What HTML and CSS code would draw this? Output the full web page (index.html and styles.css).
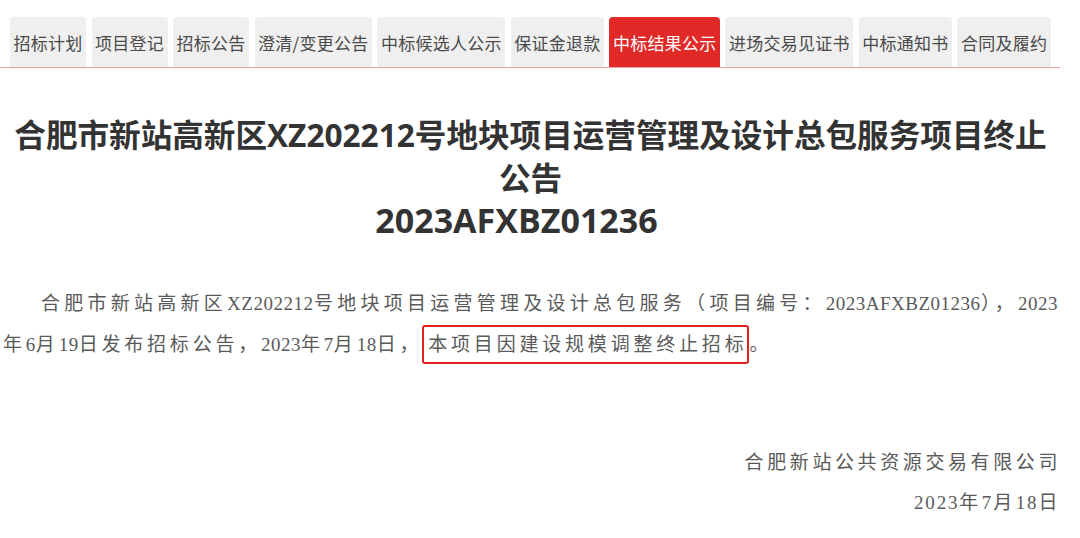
FILE: index.html
```html
<!DOCTYPE html>
<html lang="zh-CN">
<head>
<meta charset="utf-8">
<title>中标结果公示</title>
<link rel="stylesheet" href="styles.css">
</head>
<body>
<nav class="tabs">
  <a class="tab">招标计划</a>
  <a class="tab">项目登记</a>
  <a class="tab">招标公告</a>
  <a class="tab">澄清/变更公告</a>
  <a class="tab">中标候选人公示</a>
  <a class="tab">保证金退款</a>
  <a class="tab active">中标结果公示</a>
  <a class="tab">进场交易见证书</a>
  <a class="tab">中标通知书</a>
  <a class="tab">合同及履约</a>
</nav>
<main class="article">
  <h1 class="title">
    <span class="title-line">合肥市新站高新区XZ202212号地块项目运营管理及设计总包服务项目终止</span>
    <span class="title-line">公告</span>
    <span class="title-line code">2023AFXBZ01236</span>
  </h1>
  <div class="body">
    <p class="para">
      <span class="line first">合肥市新站高新区<span class="lat">XZ202212</span>号地块项目运营管理及设计总包服务（项目编号：<span class="lat">2023AFXBZ01236</span>），<span class="lat">2023</span></span>
      <span class="line">年<span class="lat">6</span>月<span class="lat">19</span>日发布招标公告，<span class="lat">2023</span>年<span class="lat">7</span>月<span class="lat">18</span>日，<span class="mark">本项目因建设规模调整终止招标</span>。</span>
    </p>
    <div class="sign">
      <p class="sign-line">合肥新站公共资源交易有限公司</p>
      <p class="sign-line"><span class="lat wide">2023</span>年<span class="lat wide">7</span>月<span class="lat wide">18</span>日</p>
    </div>
  </div>
</main>
</body>
</html>
```

FILE: styles.css
```css
* { box-sizing: border-box; }
html, body { margin: 0; padding: 0; background: #fff; }
body { width: 1080px; font-family: "Noto Sans CJK SC", sans-serif; }

.tabs {
  display: flex;
  gap: 5.5px;
  width: 1060px;
  margin-top: 17px;
  padding-left: 10px;
  border-bottom: 1px solid #e9a3a3;
}
.tab {
  display: flex;
  align-items: center;
  height: 50px;
  padding: 0 3.5px;
  background: #efefef;
  color: #4a4a4a;
  font-size: 17px;
  letter-spacing: 0.25px;
  border-radius: 4px 4px 0 0;
  white-space: nowrap;
}
.tab.active { background: #e12a27; color: #fff; }

.article { width: 1060px; padding: 0 2px 0 3px; }

.title {
  margin: 45px 0 0;
  text-align: center;
  font-family: "Open Sans", "Noto Sans CJK SC", sans-serif;
  font-weight: 700;
  font-size: 31.6px;
  line-height: 43px;
  color: #333;
}
.title-line { display: block; }
.title-line.code { font-size: 34px; padding-right: 28px; }

.body {
  font-family: "Liberation Serif", "Noto Sans CJK SC", serif;
  color: #5a5a5a;
  font-size: 19px;
}
.para { margin: 41px 0 0; line-height: 41px; }
.line { display: block; letter-spacing: 3.8px; white-space: nowrap; }
.line.first { text-indent: 38px; text-align: justify; text-align-last: justify; }
.lat { letter-spacing: 0.5px; }
.lat.wide { letter-spacing: 1.8px; }
.mark {
  border: 2px solid #e02222;
  border-radius: 3px;
  padding: 7px 0 7px 4px;
}
.sign { margin: 78px -3px 0 0; text-align: right; }
.sign-line { margin: 0; line-height: 40px; letter-spacing: 3.6px; }
```
